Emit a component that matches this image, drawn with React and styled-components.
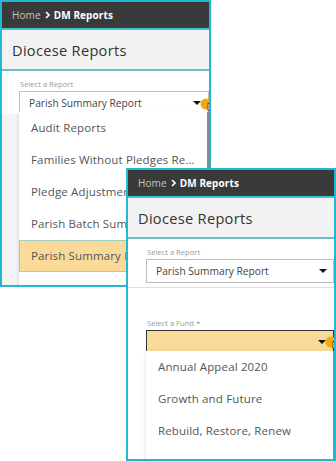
import React from "react";
import styled, { createGlobalStyle } from "styled-components";

const Global = createGlobalStyle`
  html, body { margin: 0; padding: 0; background: #fff; }
  body { font-family: "Open Sans", "Liberation Sans", sans-serif; }
  * { box-sizing: border-box; }
`;

const Canvas = styled.div`
  position: relative;
  width: 336px;
  height: 461px;
  background: #fff;
  overflow: hidden;
`;

const Window = styled.div`
  position: absolute;
  z-index: ${(p) => p.$z};
  left: ${(p) => p.$x}px;
  top: ${(p) => p.$y}px;
  width: ${(p) => p.$w}px;
  height: ${(p) => p.$h}px;
  border: 2px solid #22b8cf;
  background: ${(p) => p.$bg};
  display: flex;
  flex-direction: column;
  overflow: hidden;
`;

const Crumbs = styled.div`
  height: 28px;
  flex: none;
  background: #3a3a3a;
  border-bottom: 2px solid #3cc6d8;
  display: flex;
  align-items: center;
  gap: 3px;
  padding-left: 10px;
  font-size: 10px;
  letter-spacing: 0.1px;
`;

const CrumbHome = styled.span`
  color: #c4c4c4;
`;

const CrumbCurrent = styled.span`
  color: #fff;
  font-weight: 700;
`;

const Chevron = styled.svg`
  width: 5px;
  height: 8px;
  margin: 0 1px;
`;

const Header = styled.div`
  height: 41px;
  flex: none;
  background: #f2f2f2;
  border-bottom: 2px solid #72bcc6;
  display: flex;
  align-items: center;
  padding-left: 10px;
  font-size: 14.6px;
  color: #333;
  letter-spacing: 0.3px;
`;

const Section = styled.div`
  background: #fff;
  padding: ${(p) => p.$pad};
  flex: none;
  position: relative;
  border-bottom: ${(p) => (p.$line ? "1px solid #dedede" : "none")};
`;

const Label = styled.div`
  font-size: 7.6px;
  color: #9a9a9a;
  margin-bottom: 2px;
  padding-left: 1px;
`;

const Star = styled.span`
  color: #3bb9cc;
`;

const Select = styled.div`
  position: relative;
  height: ${(p) => p.$h}px;
  border: ${(p) => (p.$active ? "1.5px solid #333" : "1px solid #bdbdbd")};
  background: ${(p) => (p.$active ? "#f9da98" : "#fff")};
  display: flex;
  align-items: center;
  padding-left: 9px;
  font-size: 10.2px;
  color: #444;
`;

const Caret = styled.span`
  position: absolute;
  right: ${(p) => p.$r}px;
  top: 50%;
  margin-top: -2px;
  width: 0;
  height: 0;
  border-left: 4px solid transparent;
  border-right: 4px solid transparent;
  border-top: 4px solid #111;
`;

const Cursor = styled.svg`
  position: absolute;
  right: ${(p) => p.$r}px;
  top: ${(p) => p.$t}px;
  width: 14px;
  height: 14px;
  overflow: visible;
`;

const Rest = styled.div`
  flex: 1;
  background: ${(p) => p.$bg};
`;

const Menu = styled.div`
  position: absolute;
  left: ${(p) => p.$x}px;
  top: ${(p) => p.$y}px;
  width: ${(p) => p.$w}px;
  height: ${(p) => p.$h}px;
  background: #fff;
  box-shadow: 0 2px 4px rgba(0, 0, 0, 0.15);
  border-right: ${(p) => (p.$bar ? "2px solid #8a8a8a" : "none")};
  display: flex;
  flex-direction: column;
  overflow: hidden;
  z-index: 2;
`;

const Item = styled.div`
  flex: none;
  height: 32px;
  line-height: 32px;
  padding-left: 12px;
  padding-right: 11px;
  font-size: 11.5px;
  letter-spacing: 0.15px;
  color: #555;
  white-space: nowrap;
  overflow: hidden;
  text-overflow: ellipsis;
  background: ${(p) => (p.$hl ? "#f9da98" : "#fff")};
  outline: ${(p) => (p.$hl ? "1px solid #9ccfbf" : "none")};
  outline-offset: -1px;
`;

const FundArea = styled.div`
  background: #fff;
  flex: 1;
  padding: 30px 0 0 18px;
  position: relative;
`;

function CursorIcon({ r, t }) {
  return (
    <Cursor $r={r} $t={t} viewBox="0 0 14 14">
      <circle cx="6" cy="6" r="5.5" fill="#f5a70f" />
      <path
        d="M8 5 L8 13 L9.8 11.4 L11 14 L12.2 13.4 L11 10.9 L13.4 10.8 Z"
        fill="#fff"
        stroke="#222"
        strokeWidth="0.8"
        strokeLinejoin="round"
      />
    </Cursor>
  );
}

function Breadcrumb() {
  return (
    <Crumbs>
      <CrumbHome>Home</CrumbHome>
      <Chevron viewBox="0 0 5 8">
        <path d="M1 1 L4 4 L1 7" fill="none" stroke="#fff" strokeWidth="1.6" />
      </Chevron>
      <CrumbCurrent>DM Reports</CrumbCurrent>
    </Crumbs>
  );
}

const reports = [
  "Audit Reports",
  "Families Without Pledges Report",
  "Pledge Adjustments Report",
  "Parish Batch Summary Report",
  "Parish Summary Report",
  "",
];

const funds = ["Annual Appeal 2020", "Growth and Future", "Rebuild, Restore, Renew"];

export default function App() {
  return (
    <>
      <Global />
      <Canvas>
        <Window $z={1} $x={0} $y={0} $w={211} $h={287} $bg="#f4f4f4">
          <Breadcrumb />
          <Header>Diocese Reports</Header>
          <Section $pad="8px 0 0 17px">
            <Label>Select a Report</Label>
            <Select $h={23}>
              Parish Summary Report
              <Caret $r={7} />
              <CursorIcon r={-6} t={6} />
            </Select>
          </Section>
          <Rest $bg="#f4f4f4" />
          <Menu $x={17} $y={110} $w={190} $h={175} $bar>
            {reports.map((r, i) => (
              <Item key={i} $hl={i === 4}>
                {r}
              </Item>
            ))}
          </Menu>
        </Window>

        <Window $z={2} $x={126} $y={168} $w={210} $h={293} $bg="#fff">
          <Breadcrumb />
          <Header>Diocese Reports</Header>
          <Section $pad="8px 0 4px 18px" $line>
            <Label>Select a Report</Label>
            <Select $h={24}>
              Parish Summary Report
              <Caret $r={6} />
            </Select>
          </Section>
          <FundArea>
            <Label>
              Select a Fund <Star>*</Star>
            </Label>
            <Select $h={23} $active>
              <Caret $r={7} />
              <CursorIcon r={-6} t={5} />
            </Select>
            <Menu $x={18} $y={63} $w={189} $h={112} $bar>
              {funds.map((f) => (
                <Item key={f}>{f}</Item>
              ))}
            </Menu>
          </FundArea>
        </Window>
      </Canvas>
    </>
  );
}
